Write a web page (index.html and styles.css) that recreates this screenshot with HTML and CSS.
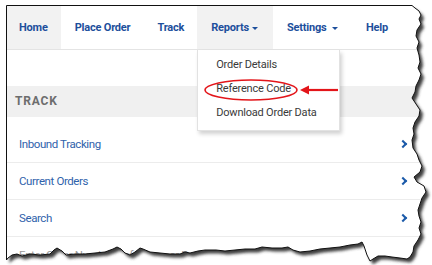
FILE: index.html
```html
<!DOCTYPE html>
<html lang="en">
<head>
    <meta charset="UTF-8">
    <title>Track - Reports menu</title>
    <link rel="stylesheet" href="styles.css">
</head>
<body>
    <div class="frame">
        <div class="topnav">
            <div class="nav-item active">Home</div>
            <div class="nav-item">Place Order</div>
            <div class="nav-item">Track</div>
            <div class="nav-item open">Reports<span class="caret"></span>
                <div class="dropdown">
                    <div class="dd-item">Order Details</div>
                    <div class="dd-item">Reference Code</div>
                    <div class="dd-item">Download Order Data</div>
                </div>
            </div>
            <div class="nav-item settings">Settings <span class="caret"></span></div>
            <div class="nav-item">Help</div>
        </div>

        <div class="content">
            <div class="section-head">TRACK</div>
            <ul class="links">
                <li>Inbound Tracking <span class="chev"></span></li>
                <li>Current Orders <span class="chev"></span></li>
                <li>Search <span class="chev"></span></li>
                <li class="hint">Enter Order Number, Reference, or Product</li>
            </ul>
        </div>
    </div>

    <!-- callout drawn on the screenshot -->
    <svg class="callout" width="432" height="265" viewBox="0 0 432 265">
        <ellipse cx="251" cy="90" rx="46" ry="10" fill="none" stroke="#e3151a" stroke-width="1.6"/>
        <line x1="307" y1="90" x2="338" y2="90" stroke="#e3151a" stroke-width="2.2"/>
        <polygon points="300,90 309,85.5 309,94.5" fill="#e3151a"/>
    </svg>

    <!-- torn paper edge -->
    <svg class="torn" width="432" height="265" viewBox="0 0 432 265">
        <defs>
            <clipPath id="outside">
                <path clip-rule="evenodd" d="M0 0H432V265H0Z M6.5 5.5 L412 5.5 L415 8 L419 11 L421 15 L419 19 L421 24 L417 30 L416 36 L419 42 L417 48 L419 55 L420 62 L418 68 L421 74 L419 80 L416 86 L415 92 L412 98 L416 104 L420 110 L419 116 L415 122 L413 128 L414 134 L412 140 L413 148 L417 154 L419 160 L422 166 L420 172 L414 177 L417 182 L424 186 L426 192 L422 198 L420 204 L418 210 L419 216 L421 222 L419 228 L421 234 L418 240 L414 246 L413 252 L410 257 L407 259 L400 258 L392 257 L385 256 L378 256 L373 259 L370 261 L367 255 L364 246 L362 242 L358 244 L350 245 L340 247 L330 248 L320 249 L310 251 L300 252 L293 250 L288 247 L282 248 L272 248 L262 247 L255 249 L245 249 L235 250 L225 251 L216 250 L205 250 L198 251 L190 253 L185 252 L180 254 L170 254 L160 253 L150 252 L143 249 L140 248 L135 252 L130 255 L125 253 L121 249 L117 247 L113 249 L105 252 L95 253 L85 254 L75 254 L66 255 L62 251 L57 248 L54 250 L50 254 L40 255 L30 254 L22 256 L17 254 L12 255 L8 258 L6.5 260 Z"/>
            </clipPath>
            <filter id="soft" x="-5%" y="-5%" width="110%" height="110%">
                <feGaussianBlur stdDeviation="1.7"/>
            </filter>
        </defs>
        <path fill="#fff" fill-rule="evenodd" d="M0 0H432V265H0Z M6.5 5.5 L412 5.5 L415 8 L419 11 L421 15 L419 19 L421 24 L417 30 L416 36 L419 42 L417 48 L419 55 L420 62 L418 68 L421 74 L419 80 L416 86 L415 92 L412 98 L416 104 L420 110 L419 116 L415 122 L413 128 L414 134 L412 140 L413 148 L417 154 L419 160 L422 166 L420 172 L414 177 L417 182 L424 186 L426 192 L422 198 L420 204 L418 210 L419 216 L421 222 L419 228 L421 234 L418 240 L414 246 L413 252 L410 257 L407 259 L400 258 L392 257 L385 256 L378 256 L373 259 L370 261 L367 255 L364 246 L362 242 L358 244 L350 245 L340 247 L330 248 L320 249 L310 251 L300 252 L293 250 L288 247 L282 248 L272 248 L262 247 L255 249 L245 249 L235 250 L225 251 L216 250 L205 250 L198 251 L190 253 L185 252 L180 254 L170 254 L160 253 L150 252 L143 249 L140 248 L135 252 L130 255 L125 253 L121 249 L117 247 L113 249 L105 252 L95 253 L85 254 L75 254 L66 255 L62 251 L57 248 L54 250 L50 254 L40 255 L30 254 L22 256 L17 254 L12 255 L8 258 L6.5 260 Z"/>
        <g clip-path="url(#outside)">
            <polygon transform="translate(3 3.5)" filter="url(#soft)" fill="#3c3c3c" points="6.5,5.5 412,5.5 415,8 419,11 421,15 419,19 421,24 417,30 416,36 419,42 417,48 419,55 420,62 418,68 421,74 419,80 416,86 415,92 412,98 416,104 420,110 419,116 415,122 413,128 414,134 412,140 413,148 417,154 419,160 422,166 420,172 414,177 417,182 424,186 426,192 422,198 420,204 418,210 419,216 421,222 419,228 421,234 418,240 414,246 413,252 410,257 407,259 400,258 392,257 385,256 378,256 373,259 370,261 367,255 364,246 362,242 358,244 350,245 340,247 330,248 320,249 310,251 300,252 293,250 288,247 282,248 272,248 262,247 255,249 245,249 235,250 225,251 216,250 205,250 198,251 190,253 185,252 180,254 170,254 160,253 150,252 143,249 140,248 135,252 130,255 125,253 121,249 117,247 113,249 105,252 95,253 85,254 75,254 66,255 62,251 57,248 54,250 50,254 40,255 30,254 22,256 17,254 12,255 8,258 6.5,260"/>
        </g>
        <polygon fill="none" stroke="#111" stroke-width="1" points="6.5,5.5 412,5.5 415,8 419,11 421,15 419,19 421,24 417,30 416,36 419,42 417,48 419,55 420,62 418,68 421,74 419,80 416,86 415,92 412,98 416,104 420,110 419,116 415,122 413,128 414,134 412,140 413,148 417,154 419,160 422,166 420,172 414,177 417,182 424,186 426,192 422,198 420,204 418,210 419,216 421,222 419,228 421,234 418,240 414,246 413,252 410,257 407,259 400,258 392,257 385,256 378,256 373,259 370,261 367,255 364,246 362,242 358,244 350,245 340,247 330,248 320,249 310,251 300,252 293,250 288,247 282,248 272,248 262,247 255,249 245,249 235,250 225,251 216,250 205,250 198,251 190,253 185,252 180,254 170,254 160,253 150,252 143,249 140,248 135,252 130,255 125,253 121,249 117,247 113,249 105,252 95,253 85,254 75,254 66,255 62,251 57,248 54,250 50,254 40,255 30,254 22,256 17,254 12,255 8,258 6.5,260"/>
    </svg>
</body>
</html>
```

FILE: styles.css
```css
* { margin: 0; padding: 0; box-sizing: border-box; }
html, body { width: 432px; height: 265px; overflow: hidden; background: #fff; }
body {
    font-family: "Roboto", sans-serif;
    color: #333;
    position: relative;
}
.frame { margin: 6px 0 0 7px; width: 440px; }

.topnav {
    display: flex;
    height: 44px;
    border-bottom: 1px solid #e4e4e4;
}
.nav-item {
    position: relative;
    padding: 0 13px 0 12px;
    line-height: 43px;
    font-size: 11px;
    font-weight: bold;
    letter-spacing: -0.2px;
    color: #1d4f9c;
}
.nav-item.active, .nav-item.open { background: #f2f2f2; }
.nav-item:nth-child(2), .nav-item:nth-child(3) { padding-left: 14px; }
.nav-item.open { padding: 0 15px 0 14px; }
.nav-item.settings { padding: 0 16px 0 14px; }
.caret {
    display: inline-block;
    width: 0; height: 0;
    margin-left: 3px;
    vertical-align: middle;
    border-left: 3px solid transparent;
    border-right: 3px solid transparent;
    border-top: 3px solid #1d4f9c;
}

.dropdown {
    position: absolute;
    top: 44px;
    left: 0;
    width: 143px;
    padding: 3px 0 5px;
    background: #fff;
    border: 1px solid #e2e2e2;
    border-top: none;
    box-shadow: 2px 3px 4px rgba(0, 0, 0, 0.18);
    z-index: 5;
}
.dd-item {
    padding-left: 18px;
    line-height: 24px;
    font-size: 11px;
    font-weight: normal;
    letter-spacing: -0.2px;
    color: #3a3a3a;
    white-space: nowrap;
}

.content { padding-top: 36px; }
.section-head {
    height: 31px;
    line-height: 31px;
    padding-left: 8px;
    background: #f0f0f0;
    font-size: 12px;
    font-weight: bold;
    letter-spacing: 0.8px;
    color: #6d6d6d;
}
.links { list-style: none; padding-top: 9px; }
.links li {
    position: relative;
    height: 37px;
    line-height: 36px;
    padding-left: 12px;
    border-bottom: 1px solid #ececec;
    font-size: 11.5px;
    letter-spacing: -0.4px;
    color: #2f62ab;
}
.links li.hint { color: #9a9a9a; border-bottom: none; }
.chev {
    position: absolute;
    left: 393px;
    top: 15px;
    width: 6px;
    height: 6px;
    border-right: 2.5px solid #1b5aa9;
    border-bottom: 2.5px solid #1b5aa9;
    transform: rotate(-45deg);
}

.callout, .torn { position: absolute; top: 0; left: 0; pointer-events: none; }
.callout { z-index: 8; }
.torn { z-index: 10; }
```
